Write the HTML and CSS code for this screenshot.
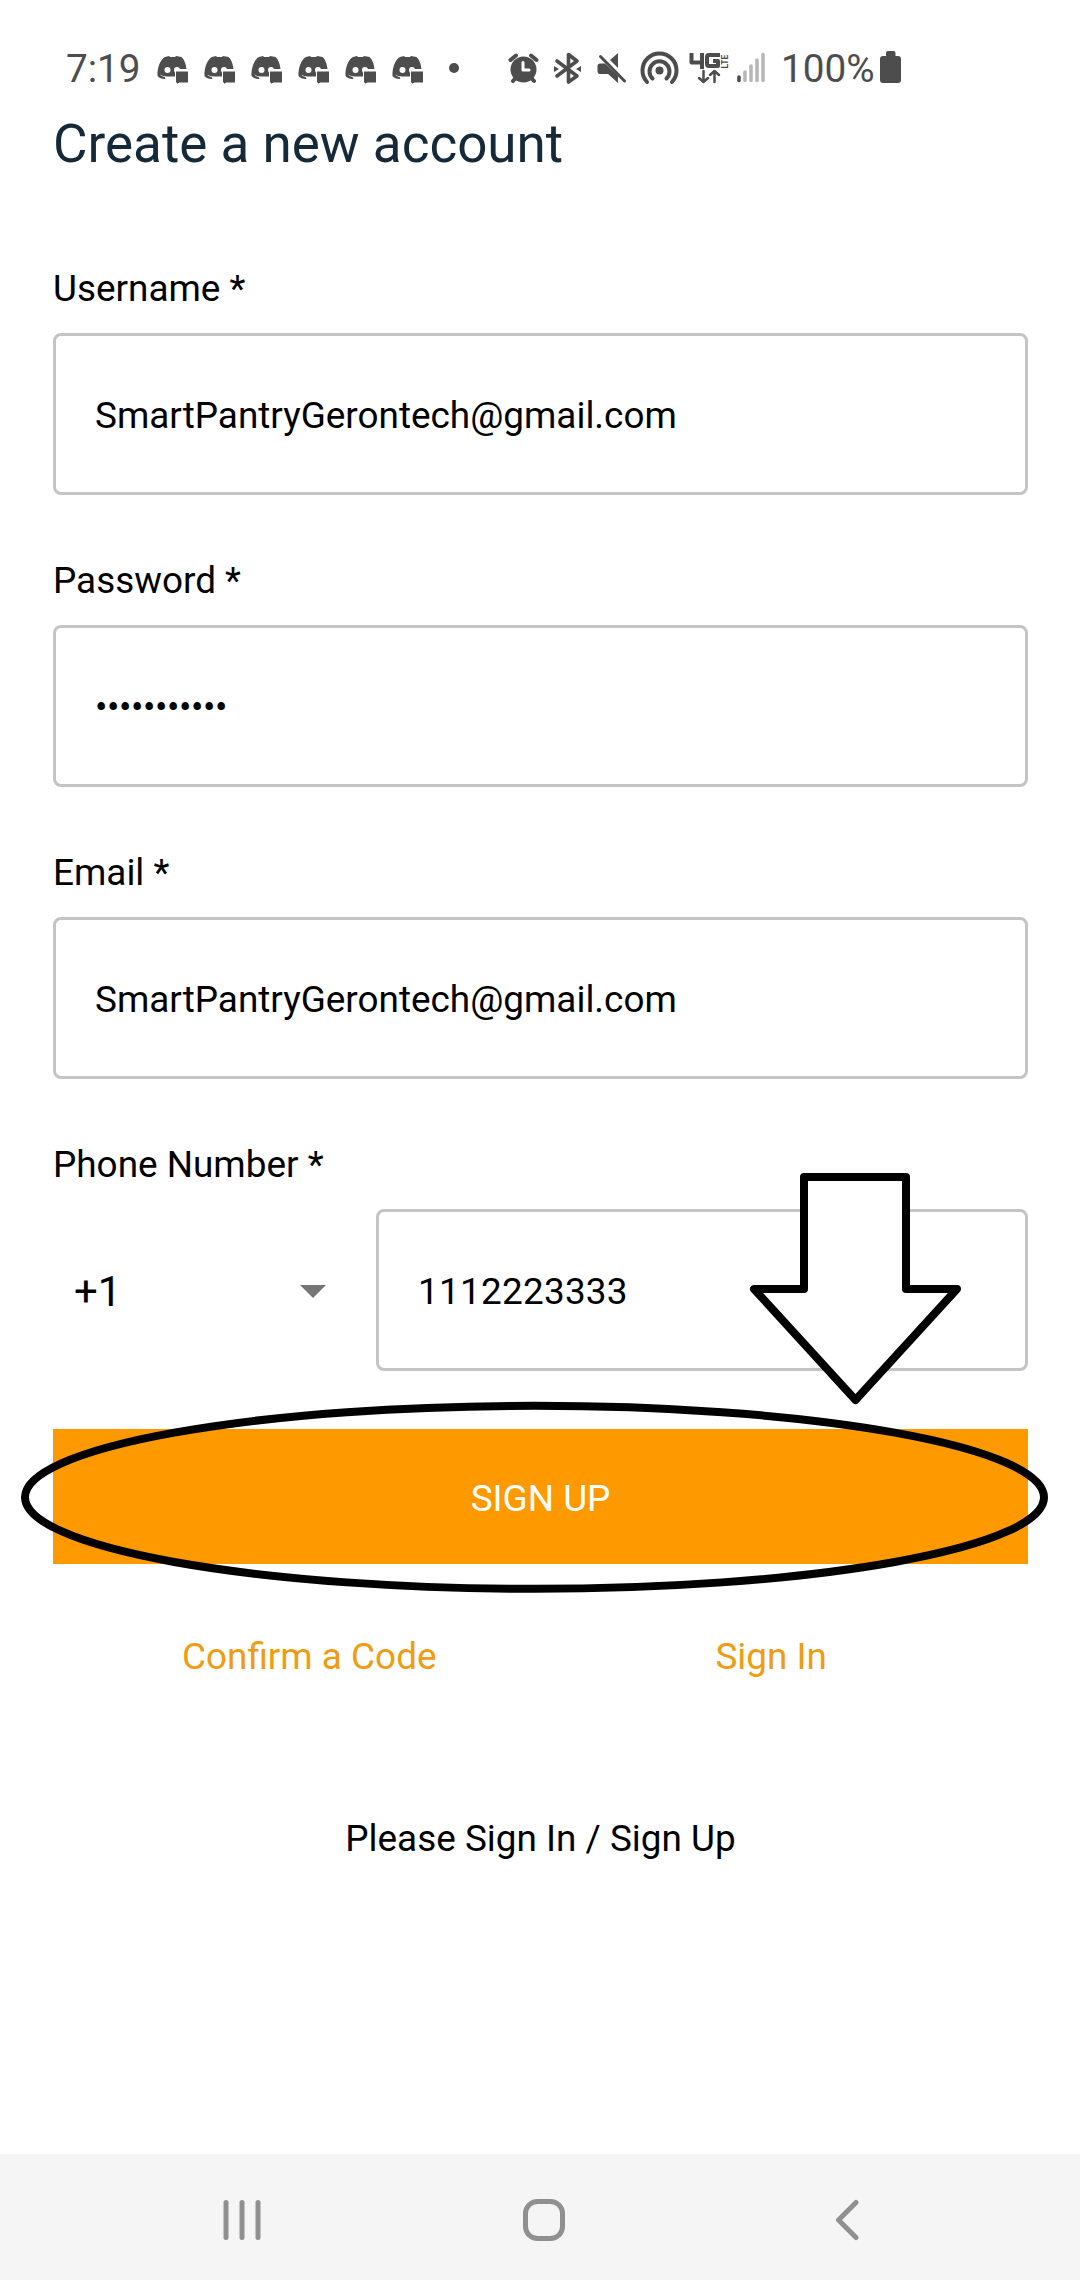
FILE: index.html
```html
<!DOCTYPE html>
<html lang="en">
<head>
<meta charset="utf-8">
<title>Create a new account</title>
<link rel="stylesheet" href="styles.css">
</head>
<body>
<svg width="0" height="0" class="defs">
  <symbol id="discord" viewBox="0 0 32 32">
    <path d="M8 5C3.500 7 0 16 .5 24C2 26 6 27.500 8.500 27L7.500 25C5 24.500 4 23.500 3 22.500C5 23.500 7 24.500 10 24.500L19 24.500V17H29.500C29 12 27 7 24.500 5L19 4L18 5H13L12 4Z"/>
    <circle cx="10.500" cy="18" r="3" fill="#fff"/>
    <circle cx="20" cy="18" r="3" fill="#fff"/>
    <path d="M18.500 19H31.500V31H22L20 33V31H18.500Z" stroke="#fff" stroke-width="1"/>
  </symbol>
</svg>
<div class="phone">
  <header class="status">
    <span class="time">7:19</span>
    <div class="notifications">
      <svg><use href="#discord"/></svg>
      <svg><use href="#discord"/></svg>
      <svg><use href="#discord"/></svg>
      <svg><use href="#discord"/></svg>
      <svg><use href="#discord"/></svg>
      <svg><use href="#discord"/></svg>
    </div>
    <span class="more"></span>
    <svg class="system" width="262" height="36" viewBox="506 50 262 36">
      <circle cx="523.500" cy="69.500" r="13"/>
      <path d="M510.500 60L516 55.500M531 55.500L536.500 60M513 81L516.500 77M534 81L530.500 77" class="line w4"/>
      <path d="M523 62.500V70H529" class="line w3 light"/>
      <path d="M557 61L577 76L568.500 82V54.500L577 61L557 76" class="line w35"/>
      <path d="M554 66L559 69L554 72ZM581 66L576 69L581 72Z"/>
      <path d="M597.500 66Q597.500 63.500 600 63.500H605L618 76V83L608 74H600Q597.500 74 597.500 71ZM610 60L618 53V68Z"/>
      <path d="M600.500 56.500L624.500 81" class="line w3"/>
      <circle cx="659.500" cy="70.500" r="4"/>
      <path d="M647 82A17 17 0 1 1 672 82" class="line w4"/>
      <path d="M652.500 78.500A10 10 0 1 1 666.500 78.500" class="line w4"/>
      <path d="M691.500 53V62.500H702M702 53V69M720 55H709Q707 55 707 57V64Q707 66 709 66H718V61H713" class="line w4 square"/>
      <path d="M703.500 71V81M699 78L703.500 82L708 78M714.500 82V72M710 75L714.500 71L719 75" class="line w25"/>
      <text x="-68.500" y="728" transform="rotate(-90)" class="lte">LTE</text>
      <path d="M739 77V80.500" class="line w35"/>
      <path d="M745 72V80.500M751 66V80.500M757 60V80.500M763 54.500V80.500" class="line w35 faint"/>
    </svg>
    <span class="percent">100%</span>
    <svg class="battery" width="22" height="33" viewBox="0 0 22 33"><path d="M6 5V2Q6 0 8 0H13.500Q15.500 0 15.500 2V5H18Q21 5 21 8V29Q21 32 18 32H3Q0 32 0 29V8Q0 5 3 5Z"/></svg>
  </header>
  <main class="form">
    <h1>Create a new account</h1>
    <label class="field"><span class="label">Username *</span><span class="box">SmartPantryGerontech@gmail.com</span></label>
    <label class="field"><span class="label">Password *</span><span class="box"><span class="secret">•••••••••••</span></span></label>
    <label class="field"><span class="label">Email *</span><span class="box">SmartPantryGerontech@gmail.com</span></label>
    <div class="field"><span class="label">Phone Number *</span>
      <div class="phone-row">
        <div class="code"><span>+1</span><svg width="26" height="13" viewBox="0 0 26 13"><path d="M0 0H26L13 13Z"/></svg></div>
        <span class="box number">1112223333</span>
      </div>
    </div>
    <div class="submit">SIGN UP</div>
    <div class="links"><a>Confirm a Code</a><a>Sign In</a></div>
    <p class="message">Please Sign In / Sign Up</p>
  </main>
  <footer class="nav">
    <svg width="38" height="42" viewBox="0 0 38 42"><path d="M3 3.500V38.500M19 3.500V38.500M35 3.500V38.500"/></svg>
    <svg width="42" height="42" viewBox="0 0 42 42"><rect x="2.500" y="2.500" width="37" height="37" rx="12"/></svg>
    <svg width="24" height="42" viewBox="0 0 24 42"><path d="M21 3.500L3.500 21L21 38.500"/></svg>
  </footer>
  <svg class="annotation" width="1080" height="2280" viewBox="0 0 1080 2280">
    <ellipse cx="534.500" cy="1497.300" rx="509.500" ry="91.500" fill="none"/>
    <path d="M804 1177H906V1289H957L855.500 1400L754 1289H804Z" fill="#fff"/>
  </svg>
</div>
</body>
</html>
```
FILE: styles.css
```css
* { box-sizing: border-box; }
body { margin: 0; background: #fff; font-family: Roboto, sans-serif; color: #000; font-size: 36.9px; }
.defs { display: block; height: 0; }
.phone { position: relative; width: 1080px; height: 2280px; display: flex; flex-direction: column; overflow: hidden; }
.status { height: 120px; display: flex; align-items: flex-start; padding: 50px 0 0 66px; color: #4d4d4d; fill: #4d4d4d; font-size: 38.700px; line-height: 38px; flex: none; }
.status svg { flex: none; display: block; }
.time { width: 91px; flex: none; }
.notifications { display: flex; gap: 15px; padding-top: 2px; }
.notifications svg { width: 32px; height: 32px; overflow: visible; }
.more { width: 10px; height: 10px; border-radius: 50%; background: #4d4d4d; margin: 13px 47px 0 25px; }
.line { fill: none; stroke: #4d4d4d; stroke-linecap: round; stroke-linejoin: round; }
.square { stroke-linecap: butt; }
.w25 { stroke-width: 2.5; }
.w3 { stroke-width: 3; }
.w35 { stroke-width: 3.6; }
.w4 { stroke-width: 4; }
.light { stroke: #fff; }
.faint { stroke: #b8b8b8; }
.lte { font: 700 8.500px Roboto, sans-serif; }
.percent { margin-left: 13px; width: 99px; white-space: nowrap; }
.battery { margin-top: 1px; }
.form { flex: 1; padding: 0 52px 0 53px; }
h1 { margin: -6px 0 0; font-weight: 400; font-size: 53px; line-height: 60px; height: 152px; color: #152939; }
.field { display: block; height: 292px; }
.label { display: block; height: 67px; line-height: 46px; }
.box { display: flex; align-items: center; height: 162px; border: 3px solid #c4c4c4; border-radius: 8px; padding: 2px 39px 0; }
.secret { letter-spacing: -.45px; }
.phone-row { display: flex; }
.code { width: 323px; display: flex; align-items: center; justify-content: space-between; padding: 2px 50px 0 21px; font-size: 42px; fill: #757575; }
.number { flex: 1; letter-spacing: .25px; }
.submit { margin-top: -5px; height: 135px; padding-top: 3px; background: #ff9900; color: #fff; display: flex; align-items: center; justify-content: center; }
.links { display: flex; justify-content: space-between; padding: 0 201px 0 129px; margin-top: 71px; line-height: 44px; color: #f09c12; }
.message { margin: 138px 0 0; text-align: center; line-height: 44px; }
.nav { height: 126px; flex: none; background: #f5f5f5; display: grid; grid-template-columns: 300px 312px auto; align-items: center; padding: 6px 0 0 223px; }
.nav svg { fill: none; stroke: #909090; stroke-width: 5; stroke-linecap: round; stroke-linejoin: round; }
.annotation { position: absolute; left: 0; top: 0; stroke: #000; stroke-width: 8; stroke-linejoin: round; }
```
